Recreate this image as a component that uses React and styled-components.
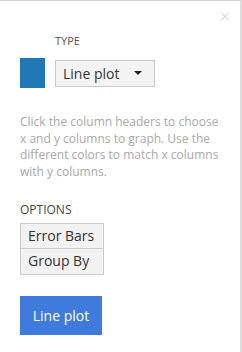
import React from 'react'
import styled, { createGlobalStyle } from 'styled-components'

const GlobalStyle = createGlobalStyle`
  html, body {
    margin: 0;
    padding: 0;
    background: #fff;
  }
  body {
    font-family: "Open Sans", "DejaVu Sans", sans-serif;
  }
`

export default function App() {
  return (
    <>
      <GlobalStyle />
      <Panel>
        <Close>×</Close>
        <TypeHeading>TYPE</TypeHeading>
        <TypeRow>
          <Swatch color="#1f77b4" />
          <Select>
            Line plot
            <Caret />
          </Select>
        </TypeRow>
        <Help>
          Click the column headers to choose x and y columns to graph. Use the
          different colors to match x columns with y columns.
        </Help>
        <Heading>OPTIONS</Heading>
        <OptionList>
          <Option>Error Bars</Option>
          <Option>Group By</Option>
        </OptionList>
        <PlotButton>Line plot</PlotButton>
      </Panel>
    </>
  )
}

const Panel = styled.div`
  position: relative;
  box-sizing: border-box;
  width: 242px;
  height: 352px;
  border-top: 1px solid #d4d4d4;
  border-right: 2px solid #dcdcdc;
  padding: 33px 0 0 20px;
`

const Close = styled.div`
  position: absolute;
  top: 5px;
  right: 10px;
  font-size: 18px;
  font-weight: 300;
  color: #cfcfcf;
  line-height: 20px;
`

const TypeHeading = styled.div`
  margin-left: 35px;
  font-size: 11px;
  color: #555;
  line-height: 14px;
`

const TypeRow = styled.div`
  display: flex;
  align-items: center;
  gap: 10px;
  margin-top: 10px;
`

const Swatch = styled.div`
  width: 25px;
  height: 30px;
  background: ${p => p.color};
`

const Select = styled.div`
  box-sizing: border-box;
  display: flex;
  align-items: center;
  width: 100px;
  height: 27px;
  padding-left: 7px;
  background: #f3f3f3;
  border: 1px solid #cacaca;
  font-size: 14px;
  color: #333;
`

const Caret = styled.span`
  margin-left: 15px;
  width: 0;
  height: 0;
  border-left: 4px solid transparent;
  border-right: 4px solid transparent;
  border-top: 4px solid #222;
`

const Help = styled.p`
  margin: 26px 0 0;
  width: 205px;
  font-size: 12px;
  line-height: 16.7px;
  color: #a9a9a9;
`

const Heading = styled.div`
  margin-top: 21px;
  font-size: 12px;
  color: #444;
  line-height: 16px;
`

const OptionList = styled.div`
  display: flex;
  flex-direction: column;
  align-items: flex-start;
  margin-top: 5px;
`

const Option = styled.div`
  box-sizing: border-box;
  width: 84px;
  height: 26px;
  padding-left: 7px;
  background: #f2f2f2;
  border: 1px solid #cacaca;
  & + & {
    border-top: none;
    height: 26px;
  }
  font-size: 14px;
  line-height: 24px;
  color: #333;
`

const PlotButton = styled.button`
  display: block;
  margin-top: 21px;
  width: 82px;
  height: 39px;
  border: none;
  background: #3e7bdd;
  color: #fff;
  font-family: inherit;
  font-size: 14px;
  padding: 0;
`
